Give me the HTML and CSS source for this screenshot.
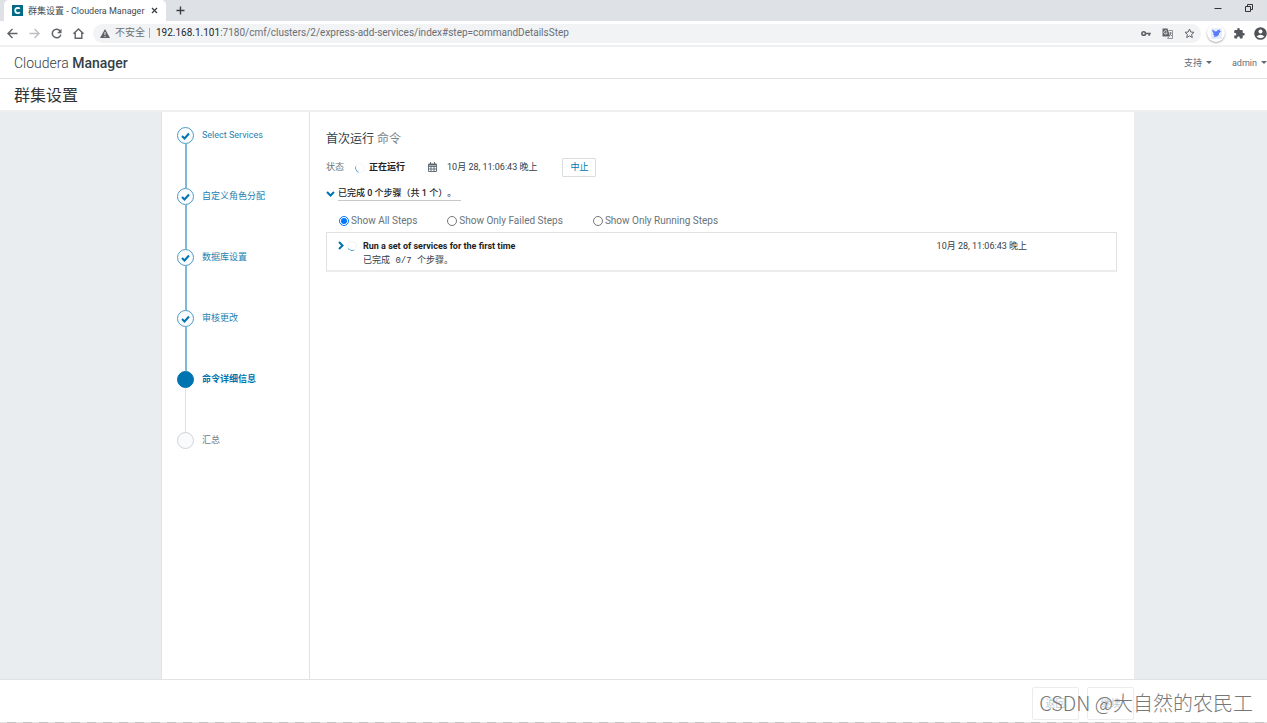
FILE: index.html
```html
<!DOCTYPE html>
<html lang="zh-CN">
<head>
<meta charset="utf-8">
<title>群集设置 - Cloudera Manager</title>
<link rel="stylesheet" href="styles.css">
</head>
<body>
<div class="tabstrip">
  <div class="tab">
    <svg class="favicon" viewBox="0 0 11 11"><rect width="11" height="11" fill="#006a87"/><path d="M7.8 3.8Q7.2 2.8 5.6 2.8Q3.2 2.9 3.2 5.5Q3.2 8.1 5.6 8.2Q7.2 8.2 7.8 7.2" fill="none" stroke="#fff" stroke-width="1.7"/></svg>
    <span class="tab-title">群集设置 - Cloudera Manager</span>
    <button class="icon-btn tab-close" aria-label="关闭"><svg width="7" height="7" viewBox="0 0 7 7"><path d="M1 1l5 5M6 1L1 6" stroke="#3c4043" stroke-width="1.3"/></svg></button>
  </div>
  <button class="icon-btn tab-new" aria-label="新标签页"><svg width="9" height="9" viewBox="0 0 9 9"><path d="M4.5 .5v8M.5 4.5h8" stroke="#3c4043" stroke-width="1.4"/></svg></button>
  <div class="window-controls">
    <button class="icon-btn" aria-label="最小化"><svg width="8" height="8" viewBox="0 0 8 8"><path d="M.5 4.5h7" stroke="#333"/></svg></button>
    <button class="icon-btn" aria-label="还原"><svg width="8" height="8" viewBox="0 0 8 8"><path d="M.5 2.5h5v5h-5zM2.500 2V.5h5v5H6" fill="none" stroke="#333"/></svg></button>
  </div>
</div>
<div class="toolbar">
  <nav class="nav-buttons">
    <button class="icon-btn" aria-label="后退"><svg width="11" height="11" viewBox="0 0 11 11"><path d="M10.5 5.5H1.5M5.5 1L1 5.5 5.5 10" fill="none" stroke="#5f6368" stroke-width="1.4"/></svg></button>
    <button class="icon-btn" aria-label="前进"><svg width="11" height="11" viewBox="0 0 11 11"><path d="M.5 5.5h9M5.5 1L10 5.5 5.5 10" fill="none" stroke="#bcbfc3" stroke-width="1.4"/></svg></button>
    <button class="icon-btn" aria-label="刷新"><svg width="11" height="11" viewBox="0 0 11 11"><path d="M9.3 3.2A4.3 4.3 0 1 0 9.8 6.6" fill="none" stroke="#5f6368" stroke-width="1.5"/><path d="M10.5.8v4.4H6.1z" fill="#5f6368"/></svg></button>
    <button class="icon-btn" aria-label="主页"><svg width="11" height="11" viewBox="0 0 11 11"><path d="M.5 5.8L5.5 1l5 4.800M2.200 4.800v5.500h6.600V4.800" fill="none" stroke="#5f6368" stroke-width="1.4"/></svg></button>
  </nav>
  <div class="address">
    <svg class="warn" width="10" height="9" viewBox="0 0 10 9"><path d="M5 0l5 9H0z" fill="#5f6368"/><path d="M5 3v3M5 7v1" stroke="#f1f3f4"/></svg>
    <span class="insecure">不安全</span>
    <span class="url"><b>192.168.1.101</b>:7180/cmf/clusters/2/express-add-services/index#step=commandDetailsStep</span>
    <div class="address-icons">
      <button class="icon-btn" aria-label="密码"><svg width="10" height="7" viewBox="0 0 10 7"><circle cx="2.700" cy="3.500" r="1.800" fill="none" stroke="#5f6368" stroke-width="1.600"/><path d="M4.500 3.500h5.300M8.200 3.500v2.300" stroke="#5f6368" stroke-width="1.700"/></svg></button>
      <button class="icon-btn" aria-label="翻译"><svg width="11" height="11" viewBox="0 0 11 11"><path d="M.5.5h5l2.500 8h-7.500z" fill="#5f6368"/><path d="M6.500 2.500h4v8H5.500l1.500-2M7 5h3M8.500 4v1q.5 2-1 3M8 6l2 2" fill="none" stroke="#777b80" stroke-width=".8"/><path d="M5 3.400a1.700 1.700 0 1 0 .2 1.500H3.700" fill="none" stroke="#f1f3f4" stroke-width=".8"/></svg></button>
      <button class="icon-btn" aria-label="收藏"><svg width="11" height="11" viewBox="0 0 11 11"><path d="M5.500 1l1.300 3 3.200.3-2.400 2.100.7 3.200-2.800-1.700-2.800 1.700.7-3.200L1 4.300 4.200 4z" fill="none" stroke="#5f6368"/></svg></button>
    </div>
  </div>
  <div class="extensions">
    <button class="icon-btn bird" aria-label="扩展"><svg width="11" height="11" viewBox="0 0 11 11"><rect width="11" height="11" rx="1" fill="#e6edff"/><path d="M1 1.500l4 2.300Q6.500 1.500 9 1.500L8.600 3l1.600.2-2 1.800Q8 8.500 4 8.700L2.500 9.700l1-2Q2.200 7 1.900 5.500L3 5.600Q1.300 4 1 1.500z" fill="#5b7cf7"/></svg></button>
    <button class="icon-btn" aria-label="扩展程序"><svg width="11" height="11" viewBox="0 0 22 22"><path d="M19 10h-1.500V6a2 2 0 0 0-2-2h-4V2.500a2.500 2.500 0 0 0-5 0V4h-4a2 2 0 0 0-2 2v3.800H2a2.700 2.700 0 0 1 0 5.400H.500V19a2 2 0 0 0 2 2h3.800v-1.500a2.700 2.700 0 0 1 5.400 0V21h3.800a2 2 0 0 0 2-2v-4H19a2.500 2.500 0 0 0 0-5z" fill="#55595e"/></svg></button>
    <button class="icon-btn" aria-label="用户"><svg width="13" height="13" viewBox="0 0 13 13"><circle cx="6.500" cy="6.500" r="6.300" fill="#4f5358"/><circle cx="6.500" cy="4.500" r="2" fill="#fff"/><path d="M2.500 9.500q4-3.500 8 0-4 3.500-8 0z" fill="#fff"/></svg></button>
  </div>
</div>
<header class="app-header">
  <div class="brand">Cloudera <strong>Manager</strong></div>
  <div class="menus">
    <button class="menu">支持 <span class="caret"></span></button>
    <button class="menu">admin <span class="caret"></span></button>
  </div>
</header>
<h1 class="page-title">群集设置</h1>
<main class="workspace">
  <ol class="steps">
    <li class="step done"><span class="dot"><svg viewBox="0 0 9 8"><path d="M1 4l2.500 2.500L8 1.500" /></svg></span><a href="#services">Select Services</a></li>
    <li class="step done"><span class="dot"><svg viewBox="0 0 9 8"><path d="M1 4l2.500 2.500L8 1.500" /></svg></span><a href="#roles">自定义角色分配</a></li>
    <li class="step done"><span class="dot"><svg viewBox="0 0 9 8"><path d="M1 4l2.500 2.500L8 1.500" /></svg></span><a href="#database">数据库设置</a></li>
    <li class="step done"><span class="dot"><svg viewBox="0 0 9 8"><path d="M1 4l2.500 2.500L8 1.500" /></svg></span><a href="#review">审核更改</a></li>
    <li class="step current"><span class="dot"></span><a href="#command">命令详细信息</a></li>
    <li class="step"><span class="dot"></span><span>汇总</span></li>
  </ol>
  <section class="content">
    <h2 class="command-title">首次运行 <small>命令</small></h2>
    <div class="status">
      <span class="status-label">状态</span>
      <span class="spinner"></span>
      <strong>正在运行</strong>
      <svg class="calendar" width="9" height="10" viewBox="0 0 9 10"><path d="M.5 2.500h8v7h-8zM.5 4.500h8M.5 7h8M3 4.500v5M6 4.500v5M2.500 0v3M6.500 0v3" fill="none" stroke="#5a656d" stroke-width=".9"/><path d="M.5 1.500h8v2h-8z" fill="#5a656d"/></svg>
      <time>10月 28, 11:06:43 晚上</time>
      <button class="abort">中止</button>
    </div>
    <button class="summary"><svg width="9" height="6" viewBox="0 0 9 6"><path d="M1 1l3.500 3.500L8 1" fill="none" stroke="#0074b0" stroke-width="2"/></svg><span>已完成 0 个步骤（共 1 个）。</span></button>
    <div class="filters">
      <label><input type="radio" name="filter" checked>Show All Steps</label>
      <label><input type="radio" name="filter">Show Only Failed Steps</label>
      <label><input type="radio" name="filter">Show Only Running Steps</label>
    </div>
    <div class="task">
      <button class="icon-btn expand" aria-label="展开"><svg width="6" height="9" viewBox="0 0 6 9"><path d="M1 1l3.500 3.500L1 8" fill="none" stroke="#0074b0" stroke-width="2"/></svg></button>
      <span class="spinner low"></span>
      <div class="task-text"><strong>Run a set of services for the first time</strong><code>已完成 0/7 个步骤。</code></div>
      <time>10月 28, 11:06:43 晚上</time>
    </div>
  </section>
</main>
<footer class="actions">
  <button disabled>返回</button>
  <button disabled>继续</button>
  <span class="watermark">CSDN @大自然的农民工</span>
</footer>
</body>
</html>
```

FILE: styles.css
```css
* { box-sizing: border-box; }
body {
  margin: 0;
  min-height: 100vh;
  display: flex;
  flex-direction: column;
  overflow-x: hidden;
  background: #fff;
  color: #333e47;
  font: 9px/14px Roboto, "Noto Sans CJK SC", sans-serif;
}
button { font: inherit; color: inherit; background: none; border: 0; padding: 0; }
svg { display: block; flex: none; }
a { color: inherit; text-decoration: none; }
.icon-btn { display: flex; align-items: center; justify-content: center; flex: none; }

.tabstrip { display: flex; height: 21px; padding-left: 4px; background: #dee1e6; }
.tab {
  display: flex;
  align-items: center;
  width: 162px;
  padding: 0 8px;
  background: #fff;
  border-radius: 5px 5px 0 0;
}
.favicon { width: 11px; height: 11px; }
.tab-title {
  flex: 1;
  margin-left: 5px;
  color: #45494d;
  font: 9px/14px Roboto, "Noto Sans CJK SC", sans-serif;
  white-space: nowrap;
}
.tab-new { margin-left: 10px; }
.window-controls { display: flex; gap: 23px; margin-left: auto; padding: 0 14px 5px 0; }

.toolbar { display: flex; align-items: center; height: 26px; border-bottom: 2px solid #f0f0f1; }
.nav-buttons { display: flex; gap: 11px; padding: 0 9px 0 7px; }
.address {
  flex: 1;
  display: flex;
  align-items: center;
  height: 19px;
  padding: 0 6px 0 7px;
  border-radius: 10px;
  background: #f1f3f4;
  font: 10px/14px Roboto, "Noto Sans CJK SC", sans-serif;
  color: #6b6f74;
}
.insecure { margin-left: 5px; padding-right: 4px; line-height: 10px; border-right: 1px solid #aaadb1; }
.url { margin-left: 6px; }
.url b { font-weight: 400; color: #25282b; }
.address-icons { display: flex; align-items: center; gap: 11px; margin-left: auto; }
.extensions { display: flex; align-items: center; gap: 9px; padding-left: 6px; }
.bird { width: 18px; height: 18px; border-radius: 50%; background: #fff; box-shadow: 0 1px 2px #aaa; }

.app-header {
  display: flex;
  align-items: center;
  justify-content: space-between;
  height: 32px;
  border-bottom: 1px solid #e0e1e2;
}
.brand { margin-left: 14px; font-size: 14px; font-weight: 300; line-height: 16px; }
.brand strong { font-weight: 500; }
.menus { display: flex; gap: 20px; color: #5f6b73; }
.menu { display: flex; align-items: center; gap: 4px; }
.caret { border: 3px solid transparent; border-top-color: currentColor; border-bottom: 0; }
.page-title {
  margin: 0;
  height: 33px;
  padding-left: 14px;
  border-bottom: 2px solid #eff0f1;
  font-size: 16px;
  font-weight: 400;
  line-height: 34px;
  color: #333;
}

.workspace {
  flex: 1;
  display: grid;
  grid-template-columns: 149px 1fr;
  padding: 0 133px 0 161px;
  background: #e9edf0;
}
.steps {
  margin: 0;
  padding: 15px 0 0 15px;
  list-style: none;
  background: #fff;
  border: solid #e0e3e6;
  border-width: 0 1px;
}
.step { position: relative; display: flex; gap: 8px; height: 61px; line-height: 17px; color: #737b81; }
.step::after {
  content: "";
  position: absolute;
  left: 8px;
  top: 17px;
  bottom: 0;
  width: 1px;
  background: #dfe2e4;
}
.step:last-child::after { content: none; }
.step.done, .step.current { color: #2481b2; }
.step.done::after { width: 2px; background: #7eb9d8; }
.dot {
  display: flex;
  align-items: center;
  justify-content: center;
  width: 17px;
  height: 17px;
  border: 1px solid #ced4d9;
  border-radius: 50%;
  background: #f9fbfd;
}
.done .dot { border-color: #4b9bc4; }
.dot svg { width: 9px; height: 8px; fill: none; stroke: #0074b0; stroke-width: 2; }
.current .dot { background: #0074b0; border-color: #0074b0; }
.current a { font-weight: 700; color: #0074b0; }

.content { padding: 17px 17px 0 16px; background: #fff; }
.command-title { margin: 0; font-size: 12px; font-weight: 400; line-height: 20px; }
.command-title small { font-size: 12px; color: #7b838a; }
.status { display: flex; align-items: center; height: 20px; margin-top: 8px; }
.status-label { color: #6c767e; }
.status strong { color: #222; }
.spinner {
  width: 10px;
  height: 10px;
  margin: 2px 4px 0 11px;
  border: 1px solid #f0f2f3;
  border-left-color: #45a0cd;
  border-radius: 50%;
  transform: rotate(-25deg);
}
.calendar { margin: 0 10px 0 23px; }
.abort {
  height: 19px;
  margin-left: 25px;
  padding: 0 7px;
  border: 1px solid #d9dddf;
  border-radius: 1px;
  color: #0074b0;
}
.summary { display: flex; align-items: center; gap: 3px; margin-top: 9px; color: #222; font-weight: 500; }
.summary span { padding-right: 5px; border-bottom: 1px solid #c5c9cb; text-spacing-trim: space-all; }
.filters { display: flex; gap: 30px; margin: 13px 0 0 13px; color: #68737b; font-size: 10px; }
.filters label { display: flex; align-items: center; gap: 2px; }
.filters input { width: 10px; height: 10px; margin: 0; }
.task {
  display: flex;
  align-items: flex-start;
  height: 40px;
  margin-top: 4px;
  padding: 6px 89px 0 11px;
  border: 1px solid #dfe1e3;
  border-bottom: 2px solid #ececed;
}
.expand { margin-top: 2px; }
.task-text { display: flex; flex-direction: column; flex: 1; }
.task-text strong { color: #222; }
.task-text code { font: 9px/16px "Liberation Mono", "Noto Sans CJK SC", monospace; text-spacing-trim: space-all; }
.low { margin: 2px 6px 0 3px; transform: rotate(-75deg); }

.actions {
  position: relative;
  display: flex;
  justify-content: flex-end;
  gap: 8px;
  height: 44px;
  padding: 7px 133px 0 0;
  border-top: 1px solid #e0e2e4;
}
.actions::after {
  content: "";
  position: absolute;
  left: 0;
  right: 0;
  bottom: 0;
  height: 1px;
  background: repeating-linear-gradient(90deg, #e4e4e4 0 7px, #c2c2c2 7px 16px);
}
.actions button { width: 47px; height: 33px; border: 1px solid #ececee; border-radius: 2px; color: #b9cad6; font-size: 10px; }
.watermark {
  position: absolute;
  right: 14px;
  top: 9px;
  color: #777;
  font: 300 20px/28px "Noto Sans CJK SC", sans-serif;
  white-space: nowrap;
}
```
